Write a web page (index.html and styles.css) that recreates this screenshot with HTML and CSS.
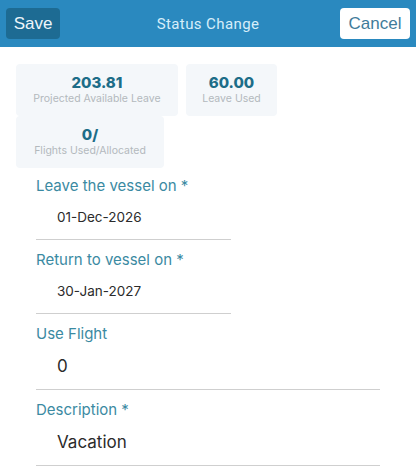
FILE: index.html
```html
<!DOCTYPE html>
<html lang="en">
<head>
  <meta charset="UTF-8">
  <meta name="viewport" content="width=device-width, initial-scale=1.0">
  <title>Status Change</title>
  <link rel="stylesheet" href="styles.css">
</head>
<body>
  <div class="header">
    <div class="header-left"><button class="btn-save">Save</button></div>
    <div class="title">Status Change</div>
    <div class="header-right"><button class="btn-cancel">Cancel</button></div>
  </div>

  <div class="stats">
    <div class="stat stat-wide">
      <div class="stat-value">203.81</div>
      <div class="stat-label">Projected Available Leave</div>
    </div>
    <div class="stat stat-small">
      <div class="stat-value">60.00</div>
      <div class="stat-label">Leave Used</div>
    </div>
    <div class="stat stat-mid">
      <div class="stat-value">0/</div>
      <div class="stat-label">Flights Used/Allocated</div>
    </div>
  </div>

  <div class="form">
    <div class="field field-short">
      <label>Leave the vessel on *</label>
      <div class="value value-date">01-Dec-2026</div>
    </div>
    <div class="field field-short">
      <label>Return to vessel on *</label>
      <div class="value value-date">30-Jan-2027</div>
    </div>
    <div class="field field-long">
      <label>Use Flight</label>
      <div class="value">0</div>
    </div>
    <div class="field field-long">
      <label>Description *</label>
      <div class="value">Vacation</div>
    </div>
  </div>
</body>
</html>
```

FILE: styles.css
```css
body {
  font-family: Inter, Roboto, sans-serif;
  margin: 0;
  padding: 0;
  background: #ffffff;
  color: #333;
}
.header {
  height: 47px;
  background: #2a89bf;
  display: grid;
  grid-template-columns: 1fr auto 1fr;
  align-items: center;
  padding: 0 6px;
}
.header-right {
  text-align: right;
}
.header button {
  font-family: 'Liberation Sans', Arial, sans-serif;
  font-size: 17px;
  height: 31px;
  border: none;
  border-radius: 4px;
  padding: 0;
  display: block;
}
.btn-save {
  background: #1d6b93;
  color: #eef6fb;
  width: 54px;
}
.btn-cancel {
  background: #ffffff;
  color: #3f7c9a;
  width: 70px;
  margin-left: auto;
}
.title {
  color: #d6eefa;
  font-family: Roboto, sans-serif;
  font-size: 15px;
  letter-spacing: 0.4px;
}
.stats {
  display: flex;
  flex-wrap: wrap;
  column-gap: 8px;
  margin: 17px 0 0 16px;
  width: 280px;
}
.stat {
  background: #f4f7fa;
  border-radius: 4px;
  height: 52px;
  display: flex;
  flex-direction: column;
  justify-content: center;
  align-items: center;
}
.stat-wide {
  width: 162px;
}
.stat-small {
  width: 91px;
}
.stat-mid {
  width: 148px;
}
.stat-value {
  color: #1d6d88;
  font-weight: 800;
  font-size: 15px;
  line-height: 17px;
}
.stat-label {
  color: #b3b9bd;
  font-size: 10.5px;
  line-height: 15px;
}
.form {
  padding: 8px 0 0 36px;
}
.field {
  border-bottom: 1px solid #cfcfcf;
  margin-bottom: 10px;
}
.field-short {
  width: 195px;
}
.field-long {
  width: 344px;
}
.field label {
  display: block;
  color: #3b8aa2;
  font-size: 15px;
  line-height: 20px;
}
.value {
  height: 45px;
  line-height: 45px;
  padding-left: 21px;
  font-size: 17px;
  color: #2b2b2b;
}
.value-date {
  height: 43px;
  line-height: 43px;
  font-size: 13.5px;
}
```
